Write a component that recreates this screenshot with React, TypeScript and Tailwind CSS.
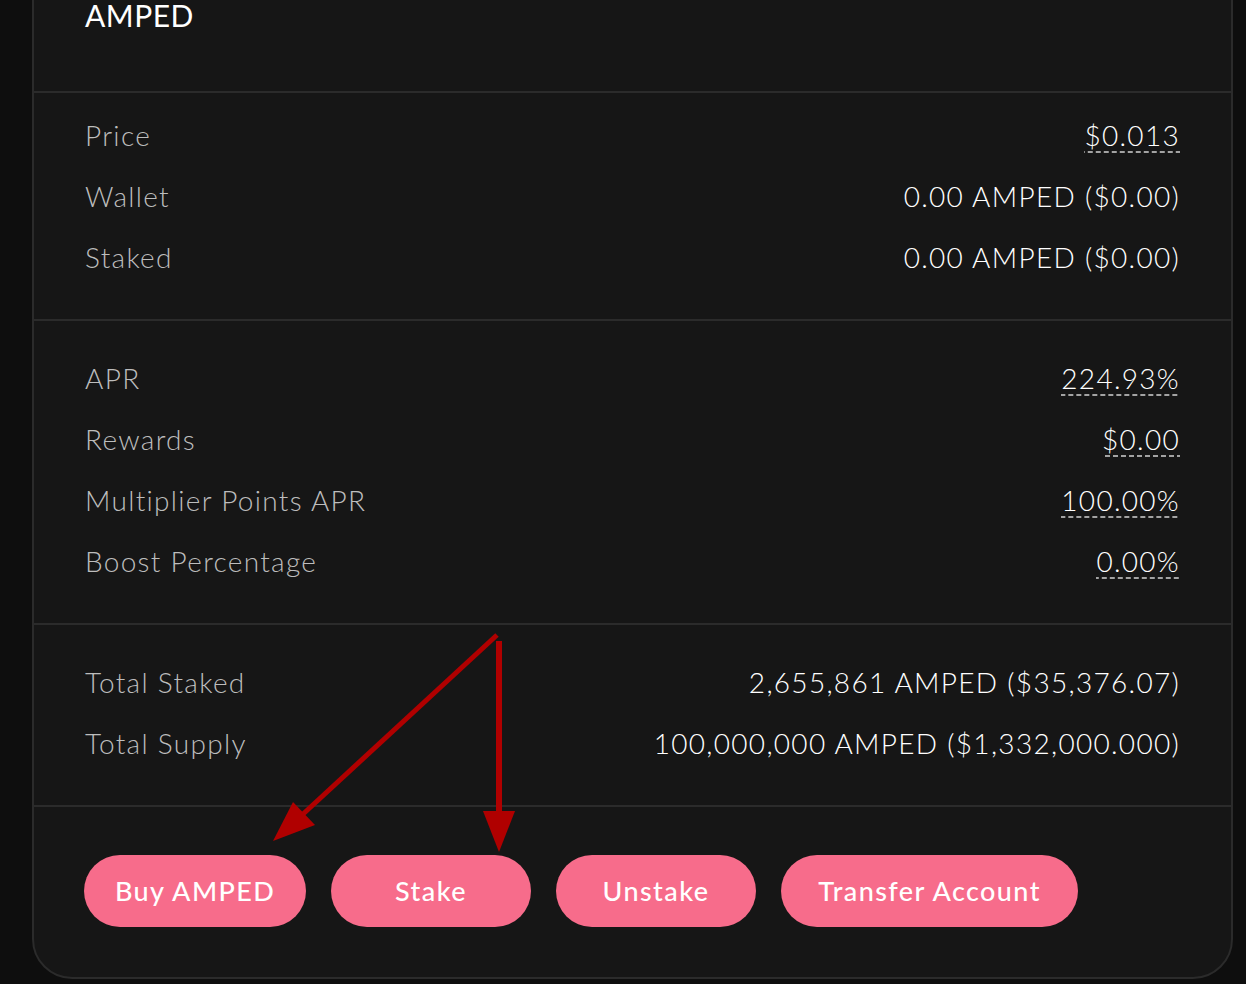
import React from 'react';

interface Row {
  label: string;
  value: string;
  dashed?: boolean;
}

const sections: Row[][] = [
  [
    { label: 'Price', value: '$0.013', dashed: true },
    { label: 'Wallet', value: '0.00 AMPED ($0.00)' },
    { label: 'Staked', value: '0.00 AMPED ($0.00)' },
  ],
  [
    { label: 'APR', value: '224.93%', dashed: true },
    { label: 'Rewards', value: '$0.00', dashed: true },
    { label: 'Multiplier Points APR', value: '100.00%', dashed: true },
    { label: 'Boost Percentage', value: '0.00%', dashed: true },
  ],
  [
    { label: 'Total Staked', value: '2,655,861 AMPED ($35,376.07)' },
    { label: 'Total Supply', value: '100,000,000 AMPED ($1,332,000.000)' },
  ],
];

const buttons = [
  { text: 'Buy AMPED', w: 'w-[222px]' },
  { text: 'Stake', w: 'w-[200px]' },
  { text: 'Unstake', w: 'w-[200px]' },
  { text: 'Transfer Account', w: 'w-[297px]' },
];

function StatRow({ row }: { row: Row }) {
  return (
    <div className="flex h-[61px] items-center justify-between">
      <span className="text-[#bdbdbd]">{row.label}</span>
      {row.dashed ? (
        <span className="mt-[4px] bg-[linear-gradient(to_right,#a3a3a3_62%,transparent_0)] bg-[length:8px_2px] bg-bottom bg-repeat-x pb-[4px] leading-none text-white">
          {row.value}
        </span>
      ) : (
        <span className="text-white">{row.value}</span>
      )}
    </div>
  );
}

export default function App() {
  return (
    <div className="relative h-[984px] overflow-hidden bg-[#0e0e0e] font-['Lato','Noto_Sans',sans-serif]">
      <div className="-mt-[10px] ml-[32px] w-[1201px] rounded-b-[40px] border-2 border-[#2b2b2b] bg-[#161616] text-[28px] font-light tracking-[1.3px]">
        {/* Header */}
        <div className="h-[99px] px-[51px] pt-[8px]">
          <h2 className="text-[30px] leading-[30px] font-normal tracking-[0.5px] text-white">AMPED</h2>
        </div>

        {sections.map((rows, i) => (
          <div
            key={i}
            className={`border-t-2 border-[#2b2b2b] px-[51px] pb-[32px] ${i === 0 ? 'pt-[11px]' : 'pt-[26px]'}`}
          >
            {rows.map((row) => (
              <StatRow key={row.label} row={row} />
            ))}
          </div>
        ))}

        {/* Actions */}
        <div className="flex gap-[25px] border-t-2 border-[#2b2b2b] px-[50px] pt-[48px] pb-[50px]">
          {buttons.map((b) => (
            <button
              key={b.text}
              className={`${b.w} h-[72px] rounded-full bg-[#f76c8b] text-[27px] font-medium tracking-[1.4px] text-white`}
            >
              {b.text}
            </button>
          ))}
        </div>
      </div>

      {/* annotation arrows */}
      <svg className="pointer-events-none absolute left-0 top-0" width="1246" height="984">
        <line x1="497" y1="635" x2="302" y2="815" stroke="#b00000" strokeWidth="5" />
        <polygon points="273,841 293,802 315,825" fill="#b00000" />
        <line x1="499" y1="641" x2="499" y2="813" stroke="#b00000" strokeWidth="6" />
        <polygon points="483,811 515,811 499,852" fill="#b00000" />
      </svg>
    </div>
  );
}
